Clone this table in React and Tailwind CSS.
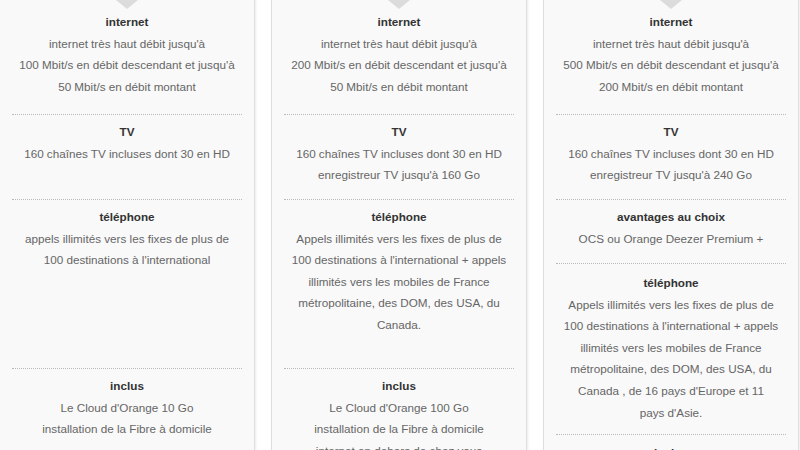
import React from "react";

function Section({ title, lines, h, first, pt }) {
  return (
    <div
      className={
        "flex flex-col items-center text-center shrink-0 " +
        (first ? "" : "mx-3 border-t border-dotted border-[#b9b9b9]")
      }
      style={{ height: h, paddingTop: pt }}
    >
      <div className="font-bold text-[#333]">{title}</div>
      {lines.map((l, i) => (
        <div key={i} className="text-[#666] whitespace-nowrap">
          {l}
        </div>
      ))}
    </div>
  );
}

function Card({ sections }) {
  return (
    <div className="w-[256px] shrink-0 h-[470px] bg-[#f9f9f9] border-x border-[#dedede] shadow-[1px_0_2px_rgba(0,0,0,0.08)] flex flex-col">
      <div className="flex justify-center shrink-0">
        <div className="w-0 h-0 border-l-[11px] border-r-[11px] border-t-[9px] border-l-transparent border-r-transparent border-t-[#dcdcdc]" />
      </div>
      {sections.map((s, i) => (
        <Section key={i} pt={i === 0 ? 2 : 6} {...s} first={i === 0} />
      ))}
    </div>
  );
}

const internet = (a, b) => ({
  title: "internet",
  lines: [
    "internet très haut débit jusqu'à",
    `${a} Mbit/s en débit descendant et jusqu'à`,
    `${b} Mbit/s en débit montant`,
  ],
  h: 105,
});

const cards = [
  [
    internet(100, 50),
    { title: "TV", lines: ["160 chaînes TV incluses dont 30 en HD"], h: 85 },
    {
      title: "téléphone",
      lines: ["appels illimités vers les fixes de plus de", "100 destinations à l'international"],
      h: 169,
    },
    {
      title: "inclus",
      lines: ["Le Cloud d'Orange 10 Go", "installation de la Fibre à domicile"],
      h: 100,
    },
  ],
  [
    internet(200, 50),
    {
      title: "TV",
      lines: ["160 chaînes TV incluses dont 30 en HD", "enregistreur TV jusqu'à 160 Go"],
      h: 85,
    },
    {
      title: "téléphone",
      lines: [
        "Appels illimités vers les fixes de plus de",
        "100 destinations à l'international + appels",
        "illimités vers les mobiles de France",
        "métropolitaine, des DOM, des USA, du",
        "Canada.",
      ],
      h: 169,
    },
    {
      title: "inclus",
      lines: [
        "Le Cloud d'Orange 100 Go",
        "installation de la Fibre à domicile",
        "internet en dehors de chez vous",
      ],
      h: 100,
    },
  ],
  [
    internet(500, 200),
    {
      title: "TV",
      lines: ["160 chaînes TV incluses dont 30 en HD", "enregistreur TV jusqu'à 240 Go"],
      h: 85,
    },
    { title: "avantages au choix", lines: ["OCS ou Orange Deezer Premium +"], h: 64 },
    {
      title: "téléphone",
      lines: [
        "Appels illimités vers les fixes de plus de",
        "100 destinations à l'international + appels",
        "illimités vers les mobiles de France",
        "métropolitaine, des DOM, des USA, du",
        "Canada , de 16 pays d'Europe et 11",
        "pays d'Asie.",
      ],
      h: 171,
      pt: 8,
    },
    { title: "inclus", lines: ["Le Cloud d'Orange 100 Go"], h: 60, pt: 7 },
  ],
];

export default function App() {
  return (
    <div
      className="w-[800px] h-[450px] overflow-hidden bg-white text-[11.7px] leading-[21.6px]"
      style={{ fontFamily: '"Liberation Sans", Arial, sans-serif' }}
    >
      <div className="flex gap-4 ml-[-1px]">
        {cards.map((c, i) => (
          <Card key={i} sections={c} />
        ))}
      </div>
    </div>
  );
}
